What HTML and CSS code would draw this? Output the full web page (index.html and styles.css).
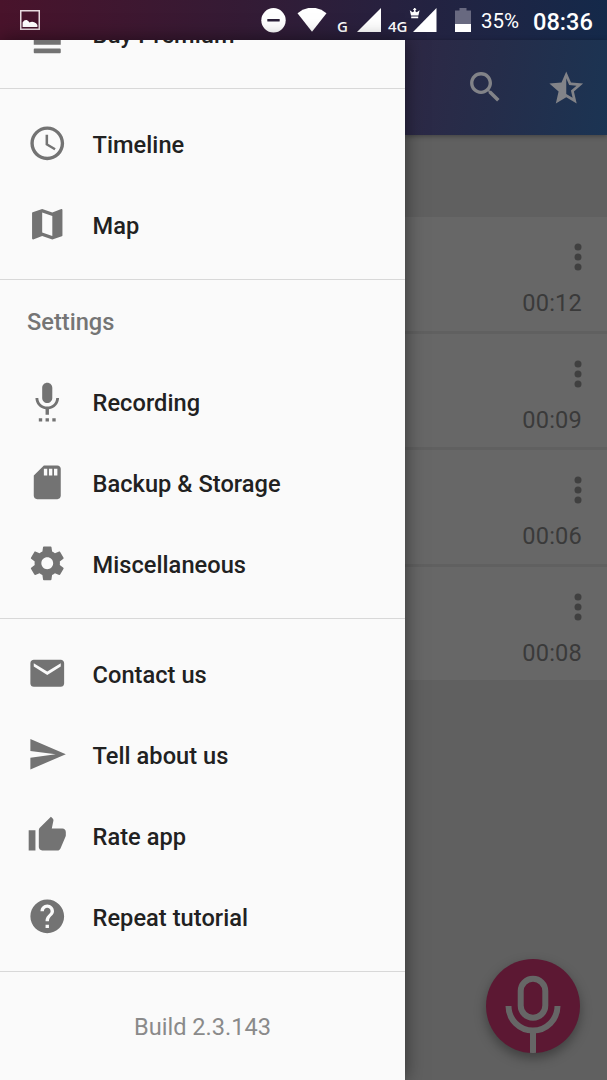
FILE: index.html
```
<!DOCTYPE html>
<html lang="en">
<head>
<meta charset="utf-8">
<title>Recordings</title>
<link rel="stylesheet" href="styles.css">
</head>
<body>
<div class="screen">
  <header class="status">
    <svg class="s-pic" width="20" height="20" viewBox="0 0 20 20"><rect x=".75" y=".75" width="18.5" height="18.5" fill="none" stroke="#e6d9de" stroke-width="1.5"/><path d="M2.6 17v-4.6q1.6-2.8 4-2.4 2 .6 2.8 2.6 2.4-1.400 4.800-.4 2.200.4 3.200 2.800v2z" fill="#fff"/></svg>
    <div class="s-right">
      <svg class="s-dnd" width="25" height="25" viewBox="0 0 25 25"><circle cx="12.500" cy="12.300" r="12.200" fill="#fff"/><rect x="6.300" y="10.900" width="12.400" height="2.600" rx=".6" fill="#2b2038"/></svg>
      <svg class="s-wifi" width="30" height="24" viewBox="0 0 30 24"><path d="M.5 5.200Q7 -.3 15 -.3t14.500 5.500L15 23.800z" fill="#fff"/></svg>
      <span class="net g">G</span>
      <svg class="s-sig" width="24" height="24" viewBox="0 0 24 24"><path d="M24 0v24H0z" fill="#fff"/></svg>
      <span class="net g4">4G</span>
      <svg class="s-crown" width="28" height="24" viewBox="0 0 28 24"><path d="M27.500 0v24H4z" fill="#fff"/><path d="M.8 2.200L3.600 4.200 4.900 3.600V2H4.200V1h.7V0h1.600v1h.7v1h-.7v1.600l1.300.6 2.800-2L9.400 7.400H2zM2.200 8.400h7v1.800h-7z" fill="#fff"/></svg>
      <svg class="s-bat" width="16" height="24" viewBox="0 0 16 24"><path d="M4.500 0h7v2.500H16V24H0V2.500h4.500z" fill="#686980"/><path d="M0 16h16v8H0z" fill="#fff"/></svg>
      <span class="pct">35%</span>
      <span class="clock">08:36</span>
    </div>
  </header>
  <div class="body">
    <nav class="drawer">
      <ul class="group first">
        <li class="item"><svg class="icon" viewBox="0 0 24 24"><path d="M4 8.800h16v3H4zM4 13.800h16v5H4zM4.500 21.100h15q.5 0 .5.500v1.700q0 .5-.5.500h-15q-.5 0-.5-.5v-1.700q0-.5.500-.5z"/></svg><span>Buy Premium</span></li>
      </ul>
      <ul class="group">
        <li class="item"><svg class="icon" viewBox="0 0 24 24"><path d="M11.990 2C6.470 2 2 6.480 2 12s4.470 10 9.990 10C17.520 22 22 17.520 22 12S17.520 2 11.990 2zM12 20c-4.420 0-8-3.580-8-8s3.580-8 8-8 8 3.580 8 8-3.580 8-8 8z"/><path d="M12.500 7H11v6l5.250 3.150.75-1.230-4.500-2.670z"/></svg><span>Timeline</span></li>
        <li class="item"><svg class="icon" viewBox="0 0 24 24"><path d="M20.500 3l-.16.030L15 5.100 9 3 3.360 4.900c-.21.070-.36.250-.36.480V20.500c0 .28.220.5.500.5l.16-.03L9 18.900l6 2.100 5.640-1.900c.21-.07.360-.25.360-.48V3.500c0-.28-.22-.5-.5-.5zM15 19l-6-2.110V5l6 2.110V19z"/></svg><span>Map</span></li>
      </ul>
      <h2 class="heading">Settings</h2>
      <ul class="group plain">
        <li class="item"><svg class="icon" viewBox="0 0 24 24"><path d="M12 13c1.660 0 2.990-1.340 2.990-3L15 4c0-1.660-1.340-3-3-3S9 2.340 9 4v6c0 1.660 1.340 3 3 3zm5.300-3c0 3-2.540 5.100-5.300 5.100S6.700 13 6.700 10H5c0 3.410 2.720 6.230 6 6.720V20h2v-3.280c3.280-.48 6-3.300 6-6.720h-1.700zM7 22h2v2H7zM11 22h2v2h-2zM15 22h2v2h-2z"/></svg><span>Recording</span></li>
        <li class="item"><svg class="icon" viewBox="0 0 24 24"><path d="M18 2h-8L4.020 8 4 20c0 1.100.9 2 2 2h12c1.100 0 2-.9 2-2V4c0-1.100-.9-2-2-2zm-6 6h-2V4h2v4zm3 0h-2V4h2v4zm3 0h-2V4h2v4z"/></svg><span>Backup &amp; Storage</span></li>
        <li class="item"><svg class="icon" viewBox="0 0 24 24"><path d="M19.430 12.980c.04-.32.070-.64.070-.98s-.03-.66-.07-.98l2.110-1.650c.19-.15.240-.42.120-.64l-2-3.460c-.12-.22-.39-.3-.61-.22l-2.490 1c-.52-.4-1.080-.73-1.690-.98l-.38-2.650C14.460 2.180 14.250 2 14 2h-4c-.25 0-.46.180-.49.420l-.38 2.650c-.61.250-1.170.59-1.690.98l-2.490-1c-.23-.09-.49 0-.61.220l-2 3.460c-.13.220-.07.490.12.640l2.110 1.650c-.04.320-.07.650-.07.980s.03.660.07.980l-2.110 1.650c-.19.150-.24.420-.12.640l2 3.460c.12.220.39.300.61.220l2.490-1c.52.400 1.080.73 1.690.98l.38 2.650c.03.240.24.420.49.420h4c.25 0 .46-.18.490-.42l.38-2.650c.61-.25 1.170-.59 1.690-.98l2.490 1c.23.090.49 0 .61-.22l2-3.460c.12-.22.070-.49-.12-.64l-2.110-1.650zM12 15.500c-1.930 0-3.500-1.570-3.500-3.500s1.570-3.500 3.500-3.500 3.500 1.570 3.500 3.500-1.570 3.500-3.500 3.500z"/></svg><span>Miscellaneous</span></li>
      </ul>
      <ul class="group">
        <li class="item"><svg class="icon" viewBox="0 0 24 24"><path d="M20 4H4c-1.100 0-1.990.9-1.990 2L2 18c0 1.100.9 2 2 2h16c1.100 0 2-.9 2-2V6c0-1.100-.9-2-2-2zm0 4l-8 5-8-5V6l8 5 8-5v2z"/></svg><span>Contact us</span></li>
        <li class="item"><svg class="icon" viewBox="0 0 24 24"><path d="M2.010 21L23 12 2.010 3 2 10l15 2-15 2z"/></svg><span>Tell about us</span></li>
        <li class="item"><svg class="icon" viewBox="0 0 24 24"><path d="M1 21h4V9H1v12zm22-11c0-1.100-.9-2-2-2h-6.310l.95-4.570.03-.32c0-.41-.17-.79-.44-1.060L14.170 1 7.590 7.590C7.220 7.950 7 8.450 7 9v10c0 1.100.9 2 2 2h9c.83 0 1.540-.5 1.840-1.220l3.020-7.050c.09-.23.140-.47.140-.73v-2z"/></svg><span>Rate app</span></li>
        <li class="item"><svg class="icon" viewBox="0 0 24 24"><path d="M12 2C6.480 2 2 6.480 2 12s4.480 10 10 10 10-4.480 10-10S17.520 2 12 2zm1 17h-2v-2h2v2zm2.070-7.750l-.9.920C13.450 12.900 13 13.500 13 15h-2v-.5c0-1.100.45-2.100 1.170-2.830l1.240-1.260c.37-.36.590-.86.590-1.410 0-1.100-.9-2-2-2s-2 .9-2 2H8c0-2.210 1.790-4 4-4s4 1.790 4 4c0 .88-.36 1.680-.93 2.250z"/></svg><span>Repeat tutorial</span></li>
      </ul>
      <p class="build">Build 2.3.143</p>
    </nav>
    <main class="content">
      <div class="toolbar">
        <svg class="tool" viewBox="0 0 24 24"><path d="M15.500 14h-.79l-.28-.27C15.410 12.590 16 11.110 16 9.500 16 5.910 13.090 3 9.500 3S3 5.910 3 9.500 5.910 16 9.500 16c1.610 0 3.090-.59 4.230-1.570l.27.28v.79l5 4.990L20.490 19l-4.990-5zm-6 0C7.010 14 5 11.990 5 9.500S7.010 5 9.500 5 14 7.010 14 9.500 11.990 14 9.500 14z"/></svg>
        <svg class="tool star" viewBox="0 0 24 24"><path d="M22 9.240l-7.190-.62L12 2 9.190 8.630 2 9.240l5.460 4.730L5.820 21 12 17.270 18.180 21l-1.630-7.030L22 9.240zM12 15.400V6.100l1.710 4.040 4.380.38-3.320 2.880 1 4.280L12 15.400z"/></svg>
      </div>
      <div class="list">
        <div class="card"><svg class="dots" viewBox="0 0 8 28"><circle cx="4" cy="4" r="3.500"/><circle cx="4" cy="14" r="3.500"/><circle cx="4" cy="24" r="3.500"/></svg><span>00:12</span></div>
        <div class="card"><svg class="dots" viewBox="0 0 8 28"><circle cx="4" cy="4" r="3.500"/><circle cx="4" cy="14" r="3.500"/><circle cx="4" cy="24" r="3.500"/></svg><span>00:09</span></div>
        <div class="card"><svg class="dots" viewBox="0 0 8 28"><circle cx="4" cy="4" r="3.500"/><circle cx="4" cy="14" r="3.500"/><circle cx="4" cy="24" r="3.500"/></svg><span>00:06</span></div>
        <div class="card"><svg class="dots" viewBox="0 0 8 28"><circle cx="4" cy="4" r="3.500"/><circle cx="4" cy="14" r="3.500"/><circle cx="4" cy="24" r="3.500"/></svg><span>00:08</span></div>
      </div>
      <div class="fab"><svg width="94" height="94" viewBox="0 0 94 94" fill="none" stroke="#666" stroke-width="6"><rect x="34.700" y="19.700" width="24.600" height="39" rx="12.300"/><path d="M22.500 47a24.500 24.500 0 0 0 49 0M47 71v23"/></svg></div>
    </main>
  </div>
</div>
</body>
</html>
```
FILE: styles.css
```
* { box-sizing: border-box; }
body { margin: 0; font-family: Roboto, "Noto Sans", sans-serif; }
ul, h2, p { margin: 0; padding: 0; list-style: none; }
svg { display: block; flex: none; }

.screen { width: 607px; height: 1080px; display: flex; flex-direction: column; overflow: hidden; }

.status {
  height: 40px; flex: none; display: flex; justify-content: space-between; align-items: flex-start;
  padding: 0 14px 0 20px; color: #fff;
  background: linear-gradient(90deg, #49132b 0%, #341b35 40%, #26213f 65%, #14294a 100%);
}
.s-pic { margin-top: 10px; }
.s-right { display: flex; align-items: flex-start; height: 40px; padding-top: 8px; }
.s-wifi { margin-left: 11px; }
.net { font: 600 15px/18px "Open Sans", "Noto Sans", sans-serif; margin-top: 9px; }
.g { width: 10px; margin-left: 10px; }
.s-sig { margin-left: 10px; }
.g4 { width: 20px; margin-left: 7px; }
.s-crown { margin-left: 1px; }
.s-bat { margin-left: 18px; }
.pct { width: 38px; margin-left: 10px; font-size: 20.500px; line-height: 27px; }
.clock { width: 60px; margin-left: 14px; font-size: 23.600px; font-weight: 500; line-height: 28px; }

.body { flex: 1; display: flex; min-height: 0; }

.drawer {
  width: 405px; flex: none; height: 1040px; overflow: hidden; background: #fafafa;
  position: relative; z-index: 1; box-shadow: 0 0 18px rgba(0, 0, 0, .5);
}
.group { border-bottom: 1px solid #d8d8d8; padding: 14px 0; }
.group.first { margin-top: -47px; height: 96px; padding: 0 0 14px; display: flex; align-items: flex-end; }
.group.plain { padding: 0 0 14px; }
.item { height: 81px; display: flex; align-items: center; padding-left: 27px; }
.icon { width: 40.500px; height: 40.500px; fill: #737373; }
.item span { margin: 2px 0 0 25px; font-size: 23.600px; font-weight: 500; line-height: 28px; letter-spacing: .05px; color: #212121; white-space: nowrap; }
.heading { height: 81px; padding: 1px 0 0 27px; font-size: 23.600px; font-weight: 500; line-height: 82px; color: #757575; }
.build { padding-top: 41px; text-align: center; font-size: 23.600px; line-height: 28px; color: #8a8a8a; }

.content { flex: 1; background: #606060; position: relative; }
.toolbar {
  height: 95px; display: flex; justify-content: flex-end; align-items: center; gap: 40px; padding: 0 21px 0 0;
  background: linear-gradient(100deg, #2e2845 0%, #252d4a 45%, #1b3453 100%);
  box-shadow: 0 1px 5px rgba(0, 0, 0, .35);
}
.tool { width: 40.500px; height: 40.500px; fill: #828388; }
.star { margin-top: 2px; }
.list { margin-top: 82px; display: flex; flex-direction: column; gap: 3px; }
.card {
  height: 113.500px; background: #676767;
  display: flex; flex-direction: column; align-items: flex-end; padding: 26px 25px 0 0;
}
.dots { width: 8px; height: 28px; fill: #404040; }
.card span { margin-top: 18px; font-size: 23.600px; line-height: 28px; letter-spacing: .2px; color: #3a3a3a; }
.fab {
  position: absolute; right: 27px; bottom: 27px; width: 94px; height: 94px; border-radius: 50%;
  overflow: hidden; background: #5c1833; box-shadow: 0 5px 12px rgba(0, 0, 0, .35);
}
```
